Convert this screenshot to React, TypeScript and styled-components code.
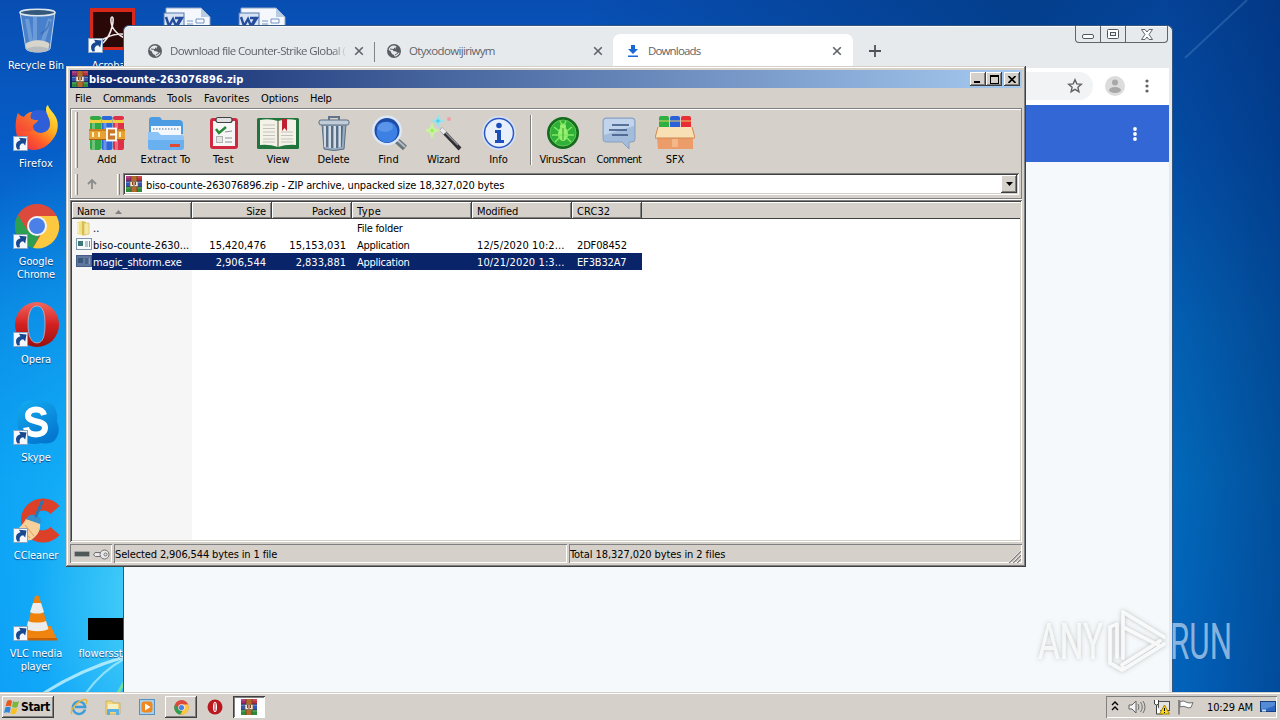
import React from 'react';
import styled, { createGlobalStyle, css } from 'styled-components';

const GlobalStyle = createGlobalStyle`
  * {
    box-sizing: border-box;
  }
  body {
    margin: 0;
    overflow: hidden;
    font-family: 'DejaVu Sans Condensed', 'DejaVu Sans', sans-serif;
    font-size: 11px;
    line-height: 13px;
    color: #000;
  }
  svg {
    display: block;
    flex: none;
  }
`;

const raised = css`
  box-shadow: inset -1px -1px #404040, inset 1px 1px #fff, inset -2px -2px #808080;
`;

const sunken = css`
  box-shadow: inset 1px 1px #808080, inset -1px -1px #fff;
`;

const Label = styled.span<{ $ls?: number }>`
  white-space: pre;
  letter-spacing: ${({ $ls }) => ($ls === undefined ? -0.13 : $ls)}px;
`;

const Screen = styled.div`
  position: relative;
  width: 1280px;
  height: 720px;
  overflow: hidden;
  display: flex;
  flex-direction: column;
`;

const Desktop = styled.div`
  position: relative;
  flex: 1;
  background:
    radial-gradient(ellipse 330px 480px at 170px 600px, rgba(90, 222, 248, 0.95), rgba(24, 184, 250, 0.65) 42%, rgba(0, 120, 230, 0) 100%),
    linear-gradient(90deg, rgba(0, 0, 0, 0) 0, rgba(0, 0, 0, 0) 45%, rgba(0, 52, 116, 0.62) 80%, rgba(0, 52, 116, 0.42) 91%, rgba(0, 44, 110, 0.66) 100%),
    linear-gradient(180deg, #084eb2 0, #065ec8 150px, #0680e0 320px, #0492f0 480px, #0488f4 692px);
`;

const Wallpaper = styled.svg`
  position: absolute;
  inset: 0;
`;

const IconGrid = styled.div`
  position: relative;
  display: grid;
  width: 300px;
  grid-template-columns: 74px 75px 75px 75px;
  grid-template-rows: repeat(7, 98px);
  padding-top: 7px;
  height: 692px;
  overflow: hidden;
`;

const Shortcut = styled.div<{ $col: number; $row: number }>`
  grid-column: ${({ $col }) => $col};
  grid-row: ${({ $row }) => $row};
  display: flex;
  flex-direction: column;
  align-items: center;
  gap: 4px;
  text-align: center;
  color: #fff;
  line-height: 13px;
  text-shadow: 0 1px 1px rgba(0, 30, 80, 0.7);
  height: 78px;
`;

const ShortcutLabel = styled(Label)<{ $shift?: boolean }>`
  margin-right: ${({ $shift }) => ($shift ? 22 : 2)}px;
`;

const ChromeWindow = styled.div`
  position: absolute;
  left: 123px;
  top: 25px;
  width: 1050px;
  height: 668px;
  border: 1px solid #34567c;
  border-bottom: none;
  border-radius: 6px 6px 0 0;
  background: #e7eaed;
  padding-right: 3px;
  box-shadow: inset 0 1px #f8fafb;
  display: flex;
  flex-direction: column;
`;

const TabStrip = styled.div`
  display: flex;
  align-items: flex-end;
  height: 42px;
  padding-left: 11px;
`;

const Tab = styled.div<{ $active?: boolean; $divider?: boolean }>`
  display: flex;
  align-items: center;
  width: ${({ $active }) => ($active ? 240 : 239)}px;
  height: 34px;
  padding: 0 ${({ $active }) => ($active ? 8 : 7)}px 0 12px;
  background: ${({ $active }) => ($active ? '#fff' : 'transparent')};
  border-radius: 7px 7px 0 0;
  color: #5f6368;
  font: 11.5px/16px 'Open Sans', 'Noto Sans', sans-serif;
  position: relative;
  ${({ $divider }) =>
    $divider &&
    css`
      &::after {
        content: '';
        position: absolute;
        right: -1px;
        top: 8px;
        height: 20px;
        width: 1px;
        background: #808488;
      }
    `}
`;

const TabTitle = styled.span<{ $ls: number; $fade?: boolean }>`
  flex: 1;
  margin: 0 4px 0 7px;
  overflow: hidden;
  white-space: nowrap;
  letter-spacing: ${({ $ls }) => $ls}px;
  ${({ $fade }) => $fade && 'mask-image: linear-gradient(90deg, #000 92%, transparent 100%);'}
`;

const NewTab = styled.div`
  display: flex;
  align-items: center;
  height: 34px;
  margin-left: 14px;
`;

const Caption = styled.div`
  position: absolute;
  right: 4px;
  top: 0;
  display: flex;
  height: 17px;
  border: 1px solid #5f6468;
  border-top: none;
  border-radius: 0 0 4px 4px;
`;

const CaptionButton = styled.div<{ $w: number }>`
  display: flex;
  align-items: center;
  justify-content: center;
  width: ${({ $w }) => $w}px;
  & + & {
    border-left: 1px solid #5f6468;
  }
`;

const ChromeToolbar = styled.div`
  display: flex;
  align-items: center;
  justify-content: flex-end;
  height: 37px;
  background: #fff;
  padding: 0 14px 1px 0;
`;

const Omnibox = styled.div`
  display: flex;
  align-items: center;
  justify-content: flex-end;
  flex: 1;
  height: 28px;
  margin-left: 100px;
  padding-right: 10px;
  border-radius: 14px;
  background: #f1f3f4;
`;

const Avatar = styled.div`
  margin: 0 14px 0 12px;
`;

const PageHeader = styled.div`
  display: flex;
  align-items: center;
  justify-content: flex-end;
  height: 57px;
  padding-right: 26px;
  background: #3367d6;
`;

const Page = styled.div`
  flex: 1;
  background: #f6f9fb;
`;

const RarWindow = styled.div`
  position: absolute;
  left: 66px;
  top: 66px;
  width: 960px;
  height: 501px;
  padding: 4px;
  background: #d5d0c9;
  box-shadow: inset -1px -1px #404040, inset 1px 1px #d4d0c8, inset -2px -2px #808080, inset 2px 2px #fff;
  display: flex;
  flex-direction: column;
`;

const TitleBar = styled.div`
  display: flex;
  align-items: center;
  height: 18px;
  padding: 0 2px 0 2px;
  background: linear-gradient(90deg, #0a246a, #a6caf0);
  color: #fff;
  font-weight: bold;
`;

const TitleText = styled(Label)`
  flex: 1;
  margin-left: 1px;
`;

const TitleButton = styled.div<{ $gap?: boolean }>`
  display: flex;
  align-items: center;
  justify-content: center;
  width: 16px;
  height: 14px;
  margin-left: ${({ $gap }) => ($gap ? 2 : 0)}px;
  background: #d5d0c9;
  ${raised}
`;

const MenuBar = styled.div`
  display: flex;
  align-items: center;
  height: 20px;
  padding-left: 5px;
`;

const MenuItem = styled.div<{ $w: number }>`
  width: ${({ $w }) => $w}px;
`;

const BarFrame = styled.div`
  height: 91px;
  border: 1px solid #808080;
  box-shadow: inset 1px 1px #fff, 0 1px #fff;
  display: flex;
  flex-direction: column;
  padding: 1px;
`;

const ToolRow = styled.div`
  display: flex;
  align-items: center;
  height: 60px;
  padding-left: 3px;
`;

const AddressRow = styled.div`
  display: flex;
  align-items: center;
  height: 27px;
  padding: 1px 0 0 3px;
`;

const Grip = styled.div<{ $h: number; $gap?: number }>`
  width: 3px;
  height: ${({ $h }) => $h}px;
  margin-right: ${({ $gap }) => $gap || 0}px;
  border-left: 1px solid #fff;
  border-right: 1px solid #808080;
`;

const ToolButton = styled.div<{ $w: number }>`
  display: flex;
  flex-direction: column;
  align-items: center;
  gap: 2px;
  width: ${({ $w }) => $w}px;
  padding-top: 1px;
`;

const ToolSeparator = styled.div`
  width: 2px;
  height: 50px;
  margin: 0 3px 0 4px;
  border-left: 1px solid #808080;
  border-right: 1px solid #fff;
`;

const UpButton = styled.div`
  display: flex;
  justify-content: center;
  width: 28px;
  margin-right: 11px;
`;

const Combo = styled.div`
  display: flex;
  align-items: center;
  flex: 1;
  height: 22px;
  margin-left: 3px;
  margin-right: 1px;
  padding: 2px 2px 2px 3px;
  background: #fff;
  box-shadow: inset 1px 1px #808080, inset -1px -1px #fff, inset 2px 2px #404040, inset -2px -2px #d4d0c8;
`;

const ComboText = styled(Label)`
  flex: 1;
  margin-left: 4px;
  padding-top: 2px;
`;

const ComboArrow = styled.div`
  display: flex;
  align-items: center;
  justify-content: center;
  width: 16px;
  height: 18px;
  background: #d5d0c9;
  ${raised}
`;

const FileList = styled.div`
  margin-top: 1px;
  height: 342px;
  padding: 2px 2px 2px 2px;
  background: linear-gradient(90deg, #f6f6f6 122px, #fff 122px);
  box-shadow: inset 1px 1px #808080, inset -1px -1px #fff, inset 2px 2px #404040, inset -2px -2px #d4d0c8;
`;

const HeaderRow = styled.div`
  display: flex;
  height: 17px;
  background: #d5d0c9;
  box-shadow: inset 0 -1px #404040, inset 0 1px #fff;
`;

const HeaderCell = styled.div<{ $w: number; $right?: boolean }>`
  display: flex;
  align-items: center;
  gap: 10px;
  justify-content: ${({ $right }) => ($right ? 'flex-end' : 'flex-start')};
  width: ${({ $w }) => $w}px;
  padding: 2px 6px 0 5px;
  box-shadow: inset -1px -1px #404040, inset 1px 1px #fff, inset -2px -2px #808080;
`;

const FileRow = styled.div<{ $selected?: boolean }>`
  display: flex;
  width: 570px;
  height: 17px;
  color: ${({ $selected }) => ($selected ? '#fff' : '#000')};
  background: ${({ $selected }) => ($selected ? 'linear-gradient(90deg, transparent 20px, #0a246a 20px)' : 'transparent')};
  ${Label} {
    padding-top: 2px;
  }
`;

const Cell = styled.div<{ $w: number; $right?: boolean }>`
  display: flex;
  align-items: center;
  justify-content: ${({ $right }) => ($right ? 'flex-end' : 'flex-start')};
  width: ${({ $w }) => $w}px;
  padding: 0 6px 0 5px;
`;

const NameCell = styled.div`
  display: flex;
  align-items: center;
  gap: 1px;
  width: 120px;
  padding-left: 4px;
`;

const StatusBar = styled.div`
  display: flex;
  gap: 2px;
  height: 19px;
  margin-top: 2px;
`;

const StatusPane = styled.div<{ $w?: number; $icons?: boolean }>`
  display: flex;
  align-items: center;
  gap: 3px;
  padding: 1px 1px 0 ${({ $icons }) => ($icons ? 4 : 1)}px;
  ${({ $w }) => ($w ? `width: ${$w}px;` : 'flex: 1;')}
  ${sunken}
`;

const Spacer = styled.div`
  flex: 1;
`;

const SizeGrip = styled.div`
  align-self: flex-end;
`;

const Watermark = styled.svg`
  position: absolute;
  left: 1030px;
  top: 600px;
`;

const Taskbar = styled.div`
  position: relative;
  display: flex;
  align-items: center;
  height: 28px;
  padding: 3px 3px 1px 2px;
  background: #d5d0c9;
  box-shadow: inset 0 1px #d4d0c8, inset 0 2px #fff;
`;

const StartButton = styled.div`
  display: flex;
  align-items: center;
  gap: 1px;
  width: 52px;
  height: 22px;
  margin-right: 8px;
  padding-left: 2px;
  font-size: 12px;
  font-weight: bold;
  ${raised}
`;

const QuickLaunch = styled.div<{ $w: number }>`
  display: flex;
  justify-content: center;
  width: ${({ $w }) => $w}px;
`;

const TaskButton = styled.div<{ $pressed?: boolean }>`
  display: flex;
  align-items: center;
  justify-content: center;
  width: 32px;
  height: 22px;
  margin-left: ${({ $pressed }) => ($pressed ? 0 : 1)}px;
  background: ${({ $pressed }) => ($pressed ? '#fff' : '#d5d0c9')};
  ${({ $pressed }) =>
    $pressed ? 'box-shadow: inset 1px 1px #404040, inset -1px -1px #fff, inset 2px 2px #808080;' : raised}
`;

const Tray = styled.div`
  display: flex;
  align-items: center;
  width: 171px;
  height: 22px;
  padding: 0 1px 0 4px;
  ${sunken}
`;

const Clock = styled(Label)`
  flex: 1;
  text-align: center;
`;

/* ---------- icons ---------- */

const RarIcon = ({ size = 16 }: { size?: number }) => (
  <svg width={size} height={size} viewBox="0 0 16 16">
    <rect x="0" y="0" width="16" height="5" fill="#a02a78" />
    <rect x="9" y="0" width="7" height="5" fill="#c0303c" />
    <rect x="0" y="5.2" width="16" height="5" fill="#3454b4" />
    <rect x="0" y="10.6" width="16" height="5.4" fill="#2c8c3c" />
    <path d="M0 1h16M0 6.5h16M0 12h16" stroke="#fff" strokeOpacity=".25" />
    <path d="M0 5h16M0 10.5h16" stroke="#222850" strokeWidth=".8" />
    <rect x="5" y="0" width="6" height="16" fill="#b06a2c" />
    <path d="M5 0v16M11 0v16" stroke="#603010" strokeWidth=".6" />
    <rect x="4" y="5.5" width="8" height="5" fill="#f0e8d8" stroke="#706050" strokeWidth=".7" />
    <path d="M6.5 6v3M8 6v4M9.5 6v3" stroke="#8a4018" />
  </svg>
);

const ShortcutArrow = () => (
  <g>
    <rect x=".5" y="31.5" width="14" height="14" fill="#f4f8fc" stroke="#8aa4c0" />
    <path d="M4.500 44.500C1.500 40 3.500 36 7.500 35.200L6 32.800l7.500.8-1.300 7-2-2.400c-3 .3-4.200 2.800-3.200 6z" fill="#184890" />
  </g>
);

const RecycleIcon = () => (
  <svg width="48" height="48" viewBox="0 0 48 48">
    <path d="M7 5l6 37c4 4 20 4 24 0l5-37z" fill="#7fa8dc" fillOpacity=".55" stroke="#b8d2ec" />
    <path d="M14 12l4 22M37 12l-7 22M22 10v24" stroke="#d8ecff" strokeOpacity=".25" strokeWidth="4" />
    <path d="M36 14c2 4-4 10-8 13" stroke="#2c60a8" strokeOpacity=".5" strokeWidth="2" fill="none" />
    <path d="M12.500 37c5-5 20-5 24 0l-1 5c-4 4-18 4-22 0z" fill="#d8d6cc" />
    <ellipse cx="24.500" cy="42.500" rx="11" ry="3" fill="#b8bcc0" />
    <ellipse cx="24.500" cy="5.500" rx="17.500" ry="3.200" fill="#34587c" stroke="#dce6ee" strokeWidth="1.500" />
  </svg>
);

const AcrobatIcon = () => (
  <svg width="48" height="48" viewBox="0 0 48 48">
    <rect x="2" y="1" width="45" height="42" fill="#d8281c" />
    <rect x="5" y="5" width="39" height="35" fill="#2a0808" />
    <path d="M13 36c-3-3 12-9 20-9 5 0 11 1 10 4-3 3-15-3-19-12-2-6-1-9 0-9 3 0 0 17-8 25-1 1-2 2-3 1z" fill="none" stroke="#f0e8e8" strokeWidth="1.600" />
    <ShortcutArrow />
  </svg>
);

const DocIcon = () => (
  <svg width="48" height="48" viewBox="0 0 48 48">
    <path d="M3 1h35l9 9v37H3z" fill="#f4f8fc" stroke="#8ca4c4" />
    <path d="M38 1v9h9z" fill="#b8cce4" />
    <rect x="1" y="6" width="20" height="20" fill="#d8e4f4" stroke="#5878b0" />
    <path d="M3 10l3 9 4-7 3 7 5-9M12 11h7l-5 8" fill="none" stroke="#244c9c" strokeWidth="2.400" />
    <path d="M24 14h6M24 17h6M33 12h8v4h-8z" stroke="#7494c4" fill="none" />
  </svg>
);

const FirefoxIcon = () => (
  <svg width="48" height="48" viewBox="0 0 48 48">
    <defs>
      <linearGradient id="fx" x1="0.900" y1="0" x2="0.200" y2="1">
        <stop offset="0" stopColor="#fff044" />
        <stop offset=".4" stopColor="#ffb020" />
        <stop offset=".7" stopColor="#ff5a2c" />
        <stop offset="1" stopColor="#e83048" />
      </linearGradient>
    </defs>
    <circle cx="26" cy="22" r="17" fill="#2f5fd8" />
    <path d="M5 8c1 2 3 3 6 4 2-3 5-5 8-5-2 3-2 5-1 7 2 1 5 1 7 1-1 3-5 4-5 6 0 4 3 7 8 7 7-1 9-5 9-9 0-6-4-10-4-14 0-2 0-4 2-5 1 5 7 8 9 15 2 7 0 14-4 19-5 7-12 11-19 11C12 45 4 38 3 26c-1-6 0-13 2-18z" fill="url(#fx)" />
    <path d="M5 8c1 2 3 3 6 4 2-3 5-5 8-5-2 3-2 5-1 7 2 1 5 1 7 1-1 3-5 4-5 6 0 2 0 3 1 4-8 4-15-2-18 3 0-8 0-13 2-20z" fill="#f0463c" fillOpacity=".55" />
    <ShortcutArrow />
  </svg>
);

const ChromeLogo = () => (
  <g>
    <circle cx="24" cy="23" r="22" fill="#dc4a3c" />
    <path d="M5 12a22 22 0 0 0 15 33l8.700-17.500A10 10 0 0 1 15 28z" fill="#2ca050" />
    <path d="M24 13h19.600A22 22 0 0 1 20 45l10-17a10 10 0 0 0-6-15z" fill="#fcc840" />
    <path d="M5 12L15.300 28A10 10 0 0 1 24 13h19.700A22 22 0 0 0 5 12z" fill="#dc4a3c" />
    <circle cx="24" cy="23" r="10" fill="#f4f4f4" />
    <circle cx="24" cy="23" r="8" fill="#4a80e8" />
  </g>
);

const ChromeIcon = () => (
  <svg width="48" height="48" viewBox="0 0 48 48">
    <ChromeLogo />
    <ShortcutArrow />
  </svg>
);

const OperaIcon = () => (
  <svg width="48" height="48" viewBox="0 0 48 48">
    <defs>
      <linearGradient id="op" x1="0" y1="0" x2="0" y2="1">
        <stop offset="0" stopColor="#f06860" />
        <stop offset=".5" stopColor="#d42020" />
        <stop offset="1" stopColor="#981010" />
      </linearGradient>
    </defs>
    <path fillRule="evenodd" d="M24 1a22 22.500 0 1 0 0 45 22 22.500 0 0 0 0-45zM24 5c6 0 8 7 8 18.500S30 42 24 42s-9-7-9-18.500S18 5 24 5z" fill="url(#op)" />
    <path d="M24 5c6 0 8 7 8 18.500S30 42 24 42s-9-7-9-18.500S18 5 24 5z" fill="none" stroke="#f8c8c0" strokeOpacity=".6" />
    <ShortcutArrow />
  </svg>
);

const SkypeIcon = () => (
  <svg width="48" height="48" viewBox="0 0 48 48">
    <defs>
      <linearGradient id="sk" x1="0" y1="0" x2=".5" y2="1">
        <stop offset="0" stopColor="#14acf0" />
        <stop offset="1" stopColor="#0478d0" />
      </linearGradient>
    </defs>
    <path d="M14 2c5-1 9 0 12 1 10-1 16 2 17 9 2 5 1 8 1 11 3 7 2 13-2 18-4 4-9 4-14 3-8 2-15 1-19-4-5-7-5-20-4-27 1-6 4-10 9-11z" fill="url(#sk)" />
    <path d="M31 16c-1-4-4-5.500-8-5.500s-8 2-8 6c0 8 17 4 17 12 0 5-4 7-9 7-5 0-9-2-10-7" fill="none" stroke="#fff" strokeWidth="6" />
    <ShortcutArrow />
  </svg>
);

const CCleanerIcon = () => (
  <svg width="48" height="48" viewBox="0 0 48 48">
    <path d="M42 13A16 16 0 1 0 42 34" fill="none" stroke="#dc4028" strokeWidth="12" />
    <path d="M13 22l14 4c1 8-3 13-9 17C12 44 6 41 2 33c5-2 8-6 11-11z" fill="#f8d09c" />
    <path d="M8 31l9 10M12 28l9 11" stroke="#d8a060" />
    <path d="M13 22c2-4 5-5 8-4l5 2c3 2 2 5 1 7z" fill="#3490cc" />
    <path d="M23 19l6-14" stroke="#2878b4" strokeWidth="3" strokeLinecap="round" />
    <ShortcutArrow />
  </svg>
);

const VlcIcon = () => (
  <svg width="48" height="48" viewBox="0 0 48 48">
    <path d="M12 31h26l6 14H6z" fill="#f08410" />
    <path d="M6 43h38v2.500H6z" fill="#c86008" />
    <path d="M22 1q2-1 4 0l10 35c-5 4-18 4-23 0z" fill="#f0820c" />
    <path d="M20 8h8l3 9c-3 2-11 2-14 0z" fill="#ececec" />
    <path d="M15 26c4 2 14 2 18 0l2.500 8c-5 3-17 3-22 0z" fill="#ececec" />
    <ShortcutArrow />
  </svg>
);

const BlackThumb = () => (
  <svg width="48" height="48" viewBox="0 0 48 48">
    <path d="M0 23h48v22H0z" fill="#000" />
  </svg>
);

const GlobeIcon = () => (
  <svg width="16" height="16" viewBox="0 0 16 16">
    <circle cx="8" cy="8" r="7" fill="#5a5e62" />
    <path d="M8.500 2.500l2 1-1 2-2 .5-.5 2 3 .5 2 1.500 1.500-.5c-.6 2-2 3.600-4.500 4.200L8 12l-2-1-1.500-3L2.600 7C3 4.500 5 2.500 8.500 2.500z" fill="#e7eaed" />
    <path d="M4 6l4 .500 1-2M9 12l3-2" stroke="#5a5e62" fill="none" />
  </svg>
);

const DownloadIcon = () => (
  <svg width="16" height="16" viewBox="0 0 16 16">
    <path d="M6 2h4v4h3l-5 5-5-5h3zM3 12.500h10V14H3z" fill="#1a67d8" />
  </svg>
);

const CloseIcon = () => (
  <svg width="16" height="16" viewBox="0 0 16 16">
    <path d="M4.200 4.200l7.600 7.600M11.800 4.200l-7.600 7.600" stroke="#5f6368" strokeWidth="1.600" />
  </svg>
);

const Dots = ({ color, r = 1.6 }: { color: string; r?: number }) => (
  <svg width="16" height="16" viewBox="0 0 16 16">
    <circle cx="8" cy="3" r={r} fill={color} />
    <circle cx="8" cy="8" r={r} fill={color} />
    <circle cx="8" cy="13" r={r} fill={color} />
  </svg>
);

const AddIcon = () => (
  <svg width="36" height="36" viewBox="0 0 36 36">
    {['#30a844', '#2c68d8', '#e03048'].map((color, i) => (
      <g key={color}>
        <rect x={1 + i * 11.5} y="2" width="11" height="33" rx="2" fill={color} />
        <rect x={3 + i * 11.5} y="8" width="3" height="27" fill="#fff" fillOpacity=".3" />
        <rect x={1 + i * 11.5} y="4" width="11" height="4" fill="#f0d040" />
        <rect x={1 + i * 11.5} y="1" width="11" height="4" rx="2" fill={color} />
      </g>
    ))}
    <rect x="0" y="14" width="36" height="11" rx="1" fill="#e8a030" />
    <path d="M0 15h36M0 24.500h36" stroke="#a86010" />
    <path d="M4 17v5M10 17v5M31 17v5" stroke="#fff0c0" strokeWidth="2" />
    <rect x="18" y="13.500" width="9" height="12" fill="#c87828" stroke="#fff" strokeWidth="1.800" />
    <path d="M21 19.500h7" stroke="#fff" strokeWidth="2" />
  </svg>
);

const ExtractIcon = () => (
  <svg width="38" height="36" viewBox="0 0 38 36">
    <path d="M2 5q0-3 3-3h7q2 0 3 3h17q4 0 4 4v10H2z" fill="#4c9ce4" />
    <path d="M4 11h30v11H4z" fill="#f4f8fc" />
    <path d="M6 14h26" stroke="#a0b4c8" strokeWidth="2" strokeDasharray="1.500 1.500" />
    <path d="M1 17h10l3 3h20q3 0 3 3v9q0 3-3 3H4q-3 0-3-3z" fill="#8cc4f8" />
    <path d="M1 25h36v7q0 3-3 3H4q-3 0-3-3z" fill="#68b0f0" />
    <rect x="23" y="29" width="10" height="3" fill="#e04830" />
  </svg>
);

const TestIcon = () => (
  <svg width="32" height="36" viewBox="0 0 32 36">
    <rect x="2" y="3" width="28" height="31" rx="3" fill="#d02840" />
    <rect x="5" y="6" width="22" height="25" fill="#f6f6f6" />
    <rect x="8" y="2.500" width="16" height="5" rx="2" fill="#e0e0e0" stroke="#404040" strokeWidth="1.200" />
    <path d="M8 14l3 4 7-6" fill="none" stroke="#288838" strokeWidth="2.500" />
    <path d="M17 17l7-1M17 23h7M17 27h7" stroke="#909090" />
    <rect x="8.500" y="21.500" width="6" height="6" fill="#e4e4e4" stroke="#b0b0b0" />
  </svg>
);

const ViewIcon = () => (
  <svg width="44" height="36" viewBox="0 0 44 36">
    <rect x="1" y="3" width="42" height="31" rx="1.500" fill="#20743c" />
    <path d="M4 5q9-2 18 1 9-3 18-1v25q-9-1-18 2-9-3-18-2z" fill="#f4f2e8" />
    <path d="M22 6v26" stroke="#888870" strokeWidth="1.500" />
    <path d="M7 10h12M7 13.500h12M7 17h12M7 20.500h12M7 24h12M7 27h12M25 20.500h12M25 17h12M25 24h12M25 27h12" stroke="#c4c4ba" />
    <path d="M26 4h5v12l-2.500-3-2.500 3z" fill="#c02030" />
  </svg>
);

const DeleteIcon = () => (
  <svg width="32" height="36" viewBox="0 0 32 36">
    <path d="M4 9h24l-2 25q-10 3-20 0z" fill="#98acc0" stroke="#5c7084" />
    <path d="M9 11v21M14 11v22M19 11v22M24 11l-1 21" stroke="#56687e" strokeWidth="1.800" />
    <path d="M7 11v21M12 11v22M17 11v22M22 11v21" stroke="#e4ecf4" strokeWidth="1.500" />
    <rect x="1" y="5" width="30" height="5" rx="2" fill="#c0ccd8" stroke="#5c7084" />
    <path d="M11 5V2h10v3" fill="none" stroke="#60748a" strokeWidth="2" />
  </svg>
);

const FindIcon = () => (
  <svg width="36" height="36" viewBox="0 0 36 36">
    <path d="M24 24l10 9" stroke="#68747c" strokeWidth="6" />
    <path d="M24 23l10 9" stroke="#b4bcc4" strokeWidth="2" />
    <circle cx="16" cy="15.500" r="15" fill="#dce8f8" />
    <circle cx="16" cy="15.500" r="12.500" fill="#1c4ca8" />
    <circle cx="16" cy="17" r="10.500" fill="#3c80e4" />
    <ellipse cx="14" cy="12" rx="8" ry="5" fill="#88b4f4" fillOpacity=".4" />
  </svg>
);

const WizardIcon = () => (
  <svg width="36" height="36" viewBox="0 0 36 36">
    <path d="M15 14l19 20" stroke="#303034" strokeWidth="4" />
    <path d="M15 13l17 17" stroke="#909098" strokeWidth="1.500" />
    <path d="M15 14l4 4" stroke="#e8e8e8" strokeWidth="4" />
    <path d="M6 10l1.500 4 4 1.500-4 1.500L6 21l-1.500-4-4-1.500 4-1.500z" fill="#98e850" stroke="#c8f4a0" strokeWidth="2" />
    <path d="M12 1l1.300 3.500L17 6l-3.700 1.500L12 11l-1.300-3.500L7 6l3.700-1.500z" fill="#50d0e8" stroke="#98e4f0" strokeWidth="1.500" />
    <circle cx="23" cy="4" r="2" fill="#f0a0a8" />
  </svg>
);

const InfoIcon = () => (
  <svg width="36" height="36" viewBox="0 0 36 36">
    <circle cx="18" cy="18" r="17" fill="#d4e0f8" />
    <circle cx="18" cy="18" r="14.500" fill="#e8f0fc" stroke="#2c58c0" strokeWidth="1.500" />
    <circle cx="18" cy="10.500" r="2.800" fill="#1c50b8" />
    <path d="M14 15h6v10h3v3H14v-3h2v-7h-2z" fill="#1c50b8" />
  </svg>
);

const VirusIcon = () => (
  <svg width="34" height="36" viewBox="0 0 34 36">
    <circle cx="17" cy="18" r="16" fill="#146c1c" />
    <circle cx="17" cy="18" r="13" fill="#30b038" stroke="#60c858" />
    <ellipse cx="17" cy="19" rx="5" ry="7" fill="#98f070" />
    <circle cx="17" cy="11.500" r="3" fill="#98f070" />
    <path d="M8 12l5 4M26 12l-5 4M6 20h22M9 27l5-5M25 27l-5-5M14 6l2 4M20 6l-2 4" stroke="#80e860" strokeWidth="1.500" />
    <path d="M17 13v12" stroke="#30a030" />
  </svg>
);

const CommentIcon = () => (
  <svg width="34" height="36" viewBox="0 0 34 36">
    <path d="M4 3h26q3 0 3 3v18q0 3-3 3h-3v7l-7-7H4q-3 0-3-3V6q0-3 3-3z" fill="#a4bcdc" stroke="#88a0c0" />
    <path d="M4 4h26q2 0 2 2v5L2 20V6q0-2 2-2z" fill="#c8daf0" fillOpacity=".8" />
    <path d="M10 10h17M7 15h18M10 20h16" stroke="#34507c" strokeWidth="1.500" />
  </svg>
);

const SfxIcon = () => (
  <svg width="40" height="36" viewBox="0 0 40 36">
    <rect x="4" y="1" width="10" height="15" rx="2" fill="#30b040" />
    <rect x="15" y="1" width="10" height="15" rx="2" fill="#2c60d8" />
    <rect x="26" y="1" width="10" height="15" rx="2" fill="#e82c34" />
    <path d="M4 6h10M15 6h10M26 6h10" stroke="#e8d060" strokeWidth="1" />
    <path d="M3 12h34v22H3z" fill="#e8a070" />
    <path d="M3 12h34l3 11H0z" fill="#f8e0b4" />
    <path d="M2 23h36v11H3z" fill="#ec9c68" />
    <path d="M17 24v8h6v-8" fill="#f4b888" />
    <path d="M3 12L0 23M37 12l3 11M0 23h40" stroke="#d08850" />
  </svg>
);

const FolderIcon = () => (
  <svg width="16" height="16" viewBox="0 0 16 16">
    <path d="M1 2l6-1v14l-6-1z" fill="#f0e088" />
    <path d="M6 1l4 1v13l-4 .500z" fill="#d8bc50" />
    <path d="M8 3h5v11l-5 1z" fill="#f4e8a0" stroke="#d0b860" strokeWidth=".6" />
    <path d="M2 3v10" stroke="#fffce0" />
  </svg>
);

const ExeIcon = ({ selected }: { selected?: boolean }) => (
  <svg width="16" height="16" viewBox="0 0 16 16">
    <rect x=".5" y="1.500" width="15" height="11" fill={selected ? '#6078a0' : '#f6fafc'} stroke={selected ? '#485c88' : '#8098a8'} />
    <rect x="2" y="4" width="5" height="5" fill={selected ? '#385878' : '#3c7878'} />
    <path d="M9 5h3M9 7h3M9 9h3" stroke={selected ? '#384870' : '#7890a0'} />
    <path d="M13.500 4v6" stroke={selected ? '#8c9cbc' : '#5890c0'} />
  </svg>
);

const WindowsFlag = () => (
  <svg width="16" height="16" viewBox="0 0 16 16">
    <path d="M3 2q3-2 5 0L7 7.500Q4.500 6 1.500 7.500z" fill="#e85820" />
    <path d="M9 2.300q3 1.500 6 0L13.500 8Q11 9.500 8 8z" fill="#78b83c" />
    <path d="M1.300 8.500q3-1.500 5.500 0L5.500 14Q3 12.500 0 14z" fill="#3088dc" />
    <path d="M7.700 9q3 1.500 5.700 0L12 14.500q-3 1.500-5.600 0z" fill="#f8c020" />
  </svg>
);

const IeIcon = () => (
  <svg width="18" height="18" viewBox="0 0 18 18">
    <path d="M15 11.500A6.200 6.200 0 1 1 15.200 9H5" fill="none" stroke="#3c9cdc" strokeWidth="2.400" />
    <path d="M2 16C-1 13 8 2 15 1.500c3 0 2 3 .5 5" fill="none" stroke="#e8b838" strokeWidth="1.400" />
  </svg>
);

const ExplorerIcon = () => (
  <svg width="18" height="18" viewBox="0 0 18 18">
    <path d="M2 3h6l1 2h7v11H2z" fill="#f0d880" stroke="#c8a848" strokeWidth=".7" />
    <path d="M4 6h10v5H4z" fill="#f8f0c0" />
    <path d="M3 17v-5q0-1 1-1h10q1 0 1 1v5h-3v-3H6v3z" fill="#58b0e4" />
  </svg>
);

const MediaIcon = () => (
  <svg width="18" height="18" viewBox="0 0 18 18">
    <rect x="1.500" y="1.500" width="15" height="15" fill="#a8d0ec" stroke="#5890c0" />
    <rect x="3.500" y="3.500" width="11" height="11" rx="3" fill="#f08820" />
    <path d="M7 5.500v7l5.500-3.500z" fill="#fff" />
  </svg>
);

const OperaSmall = () => (
  <svg width="16" height="16" viewBox="0 0 16 16">
    <circle cx="8" cy="8" r="7.500" fill="#b81820" />
    <ellipse cx="8" cy="8" rx="2" ry="5" fill="#fff" />
    <path d="M8 4v8" stroke="#c02028" />
  </svg>
);

const toolIcons = [
  { name: 'Add', w: 54, ls: 0.1, icon: <AddIcon /> },
  { name: 'Extract To', w: 63, ls: 0.1, icon: <ExtractIcon /> },
  { name: 'Test', w: 53, ls: 0.4, icon: <TestIcon /> },
  { name: 'View', w: 56, ls: -0.1, icon: <ViewIcon /> },
  { name: 'Delete', w: 55, ls: -0.1, icon: <DeleteIcon /> },
  { name: 'Find', w: 55, ls: 0.1, icon: <FindIcon /> },
  { name: 'Wizard', w: 55, ls: -0.1, icon: <WizardIcon /> },
  { name: 'Info', w: 55, ls: 0, icon: <InfoIcon /> },
  { name: 'VirusScan', w: 55, ls: -0.3, icon: <VirusIcon />, separated: true },
  { name: 'Comment', w: 58, ls: -0.5, icon: <CommentIcon /> },
  { name: 'SFX', w: 54, ls: -0.1, icon: <SfxIcon /> },
];

const menus = [
  { name: 'File', w: 28, ls: 0 },
  { name: 'Commands', w: 64, ls: -0.45 },
  { name: 'Tools', w: 37, ls: 0.2 },
  { name: 'Favorites', w: 57, ls: 0.1 },
  { name: 'Options', w: 49, ls: -0.1 },
  { name: 'Help', w: 40, ls: -0.3 },
];

const shortcuts = [
  { name: 'Recycle Bin', col: 1, row: 1, icon: <RecycleIcon /> },
  { name: 'Firefox', col: 1, row: 2, icon: <FirefoxIcon />, ls: 0.2 },
  { name: 'Google\nChrome', col: 1, row: 3, icon: <ChromeIcon /> },
  { name: 'Opera', col: 1, row: 4, icon: <OperaIcon /> },
  { name: 'Skype', col: 1, row: 5, icon: <SkypeIcon /> },
  { name: 'CCleaner', col: 1, row: 6, icon: <CCleanerIcon /> },
  { name: 'VLC media\nplayer', col: 1, row: 7, icon: <VlcIcon /> },
  { name: 'Acrobat', col: 2, row: 1, icon: <AcrobatIcon /> },
  { name: 'flowersst', col: 2, row: 7, icon: <BlackThumb />, shift: true },
  { name: '', col: 3, row: 1, icon: <DocIcon /> },
  { name: '', col: 4, row: 1, icon: <DocIcon /> },
];

const files = [
  { name: '..', size: '', packed: '', type: 'File folder', modified: '', crc: '' },
  { name: 'biso-counte-2630...', size: '15,420,476', packed: '15,153,031', type: 'Application', modified: '12/5/2020 10:2...', crc: '2DF08452' },
  { name: 'magic_shtorm.exe', size: '2,906,544', packed: '2,833,881', type: 'Application', modified: '10/21/2020 1:3...', crc: 'EF3B32A7', selected: true },
];

const Browser = () => (
  <ChromeWindow>
    <TabStrip>
      <Tab $divider>
        <GlobeIcon />
        <TabTitle $ls={-0.62} $fade>Download file Counter-Strike Global (</TabTitle>
        <CloseIcon />
      </Tab>
      <Tab>
        <GlobeIcon />
        <TabTitle $ls={-0.65}>Otyxodowijiriwym</TabTitle>
        <CloseIcon />
      </Tab>
      <Tab $active>
        <DownloadIcon />
        <TabTitle $ls={-0.85}>Downloads</TabTitle>
        <CloseIcon />
      </Tab>
      <NewTab>
        <svg width="16" height="16" viewBox="0 0 16 16">
          <path d="M8 2v12M2 8h12" stroke="#4f5358" strokeWidth="1.800" />
        </svg>
      </NewTab>
    </TabStrip>
    <Caption>
      <CaptionButton $w={24}>
        <svg width="13" height="14" viewBox="0 0 13 14">
          <rect x=".5" y="7.500" width="11" height="4" rx="1.500" fill="#fff" stroke="#50565c" />
        </svg>
      </CaptionButton>
      <CaptionButton $w={25}>
        <svg width="12" height="12" viewBox="0 0 12 12">
          <rect x=".5" y="1.500" width="11" height="9" rx="1" fill="#fff" stroke="#50565c" />
          <rect x="3.500" y="4.500" width="5" height="3" fill="#e7eaed" stroke="#50565c" />
        </svg>
      </CaptionButton>
      <CaptionButton $w={42}>
        <svg width="12" height="11" viewBox="0 0 12 11">
          <path d="M.5.500h3.500l2 2.500 2-2.500h3.500L8 5.500l3.500 5H8l-2-2.500-2 2.500H.5l3.500-5z" fill="#fff" stroke="#50565c" strokeWidth=".9" />
        </svg>
      </CaptionButton>
    </Caption>
    <ChromeToolbar>
      <Omnibox>
        <svg width="16" height="16" viewBox="0 0 16 16">
          <path d="M8 1.800l1.800 4.100 4.500.4-3.400 3 1 4.400L8 11.400l-3.900 2.300 1-4.400-3.400-3 4.500-.4z" fill="none" stroke="#5f6368" strokeWidth="1.400" />
        </svg>
      </Omnibox>
      <Avatar>
        <svg width="20" height="20" viewBox="0 0 20 20">
          <circle cx="10" cy="10" r="10" fill="#dcdcdc" />
          <circle cx="10" cy="6.500" r="3" fill="#a8a8a8" />
          <ellipse cx="10" cy="14" rx="6" ry="3" fill="#a8a8a8" />
        </svg>
      </Avatar>
      <Dots color="#5f6368" />
    </ChromeToolbar>
    <PageHeader>
      <Dots color="#fff" r={1.9} />
    </PageHeader>
    <Page />
  </ChromeWindow>
);

const Archiver = () => (
  <RarWindow>
    <TitleBar>
      <RarIcon />
      <TitleText $ls={0.12}>biso-counte-263076896.zip</TitleText>
      <TitleButton>
        <svg width="8" height="8" viewBox="0 0 8 8"><path d="M0 6h6v2H0z" /></svg>
      </TitleButton>
      <TitleButton>
        <svg width="9" height="9" viewBox="0 0 9 9"><path d="M0 0h9v9H0zM1 2v6h7V2z" fillRule="evenodd" /></svg>
      </TitleButton>
      <TitleButton $gap>
        <svg width="8" height="7" viewBox="0 0 8 7"><path d="M.5 0l7 7M7.500 0l-7 7" stroke="#000" strokeWidth="1.600" /></svg>
      </TitleButton>
    </TitleBar>
    <MenuBar>
      {menus.map((menu) => (
        <MenuItem key={menu.name} $w={menu.w}>
          <Label $ls={menu.ls}>{menu.name}</Label>
        </MenuItem>
      ))}
    </MenuBar>
    <BarFrame>
      <ToolRow>
        <Grip $h={56} $gap={2} />
        {toolIcons.map((tool) => (
          <React.Fragment key={tool.name}>
            {tool.separated && <ToolSeparator />}
            <ToolButton $w={tool.w}>
              {tool.icon}
              <Label $ls={tool.ls}>{tool.name}</Label>
            </ToolButton>
          </React.Fragment>
        ))}
      </ToolRow>
      <AddressRow>
        <Grip $h={21} />
        <UpButton>
          <svg width="12" height="12" viewBox="0 0 12 12">
            <path d="M6 11V2M2 6l4-4 4 4" fill="none" stroke="#8c8c8c" strokeWidth="1.800" />
          </svg>
        </UpButton>
        <Grip $h={21} />
        <Combo>
          <RarIcon />
          <ComboText>biso-counte-263076896.zip - ZIP archive, unpacked size 18,327,020 bytes</ComboText>
          <ComboArrow>
            <svg width="7" height="4" viewBox="0 0 7 4"><path d="M0 0h7L3.500 4z" /></svg>
          </ComboArrow>
        </Combo>
      </AddressRow>
    </BarFrame>
    <FileList>
      <HeaderRow>
        <HeaderCell $w={120}>
          <Label $ls={-0.3}>Name</Label>
          <svg width="7" height="4" viewBox="0 0 7 4"><path d="M0 4h7L3.500 0z" fill="#808080" /></svg>
        </HeaderCell>
        <HeaderCell $w={80} $right><Label>Size</Label></HeaderCell>
        <HeaderCell $w={80} $right><Label>Packed</Label></HeaderCell>
        <HeaderCell $w={120}><Label $ls={0.4}>Type</Label></HeaderCell>
        <HeaderCell $w={100}><Label>Modified</Label></HeaderCell>
        <HeaderCell $w={70}><Label $ls={0.1}>CRC32</Label></HeaderCell>
      </HeaderRow>
      {files.map((file) => (
        <FileRow key={file.name} $selected={file.selected}>
          <NameCell>
            {file.name === '..' ? <FolderIcon /> : <ExeIcon selected={file.selected} />}
            <Label $ls={file.selected ? -0.12 : 0}>{file.name}</Label>
          </NameCell>
          <Cell $w={80} $right><Label $ls={0}>{file.size}</Label></Cell>
          <Cell $w={80} $right><Label $ls={0}>{file.packed}</Label></Cell>
          <Cell $w={120}><Label $ls={-0.25}>{file.type}</Label></Cell>
          <Cell $w={100}><Label $ls={0.12}>{file.modified}</Label></Cell>
          <Cell $w={70}><Label $ls={-0.15}>{file.crc}</Label></Cell>
        </FileRow>
      ))}
    </FileList>
    <StatusBar>
      <StatusPane $w={42} $icons>
        <svg width="16" height="8" viewBox="0 0 16 8">
          <rect x=".5" y="1.500" width="15" height="5" rx="1" fill="#505858" stroke="#a0a4a4" />
        </svg>
        <svg width="17" height="11" viewBox="0 0 17 11">
          <path d="M8 3.500H2L.5 6l2 1.500H8" fill="#e8e8e8" stroke="#707070" />
          <circle cx="11.500" cy="5.500" r="4.500" fill="#e8e8e8" stroke="#707070" />
          <circle cx="12.500" cy="5.500" r="1.500" fill="none" stroke="#707070" />
        </svg>
      </StatusPane>
      <StatusPane $w={453}>
        <Label>Selected 2,906,544 bytes in 1 file</Label>
      </StatusPane>
      <StatusPane>
        <Label $ls={-0.08}>Total 18,327,020 bytes in 2 files</Label>
        <Spacer />
        <SizeGrip>
          <svg width="13" height="13" viewBox="0 0 13 13">
            <path d="M1 13L13 1M5 13l8-8M9 13l4-4" stroke="#808080" strokeWidth="1.500" />
            <path d="M0 13L13 0M4 13l9-9M8 13l5-5" stroke="#fff" strokeWidth=".7" />
          </svg>
        </SizeGrip>
      </StatusPane>
    </StatusBar>
  </RarWindow>
);

const App: React.FC = () => (
  <>
    <GlobalStyle />
    <Screen>
      <Desktop>
        <Wallpaper width="1280" height="692" viewBox="0 0 1280 692">
          <path d="M1247 0l-62 58" stroke="#5a8cc8" strokeOpacity=".35" strokeWidth="2" />
          <path d="M44 693Q80 670 124 657" stroke="#c8f4ff" strokeOpacity=".8" strokeWidth="3" fill="none" />
          <path d="M86 693q16-22 38-34" stroke="#b8f0ff" strokeOpacity=".7" strokeWidth="2" fill="none" />
          <path d="M118 693l7-12" stroke="#70e0a0" strokeWidth="3" />
        </Wallpaper>
        <IconGrid>
          {shortcuts.map((item, index) => (
            <Shortcut key={index} $col={item.col} $row={item.row}>
              {item.icon}
              <ShortcutLabel $ls={item.ls ?? -0.1} $shift={item.shift}>{item.name}</ShortcutLabel>
            </Shortcut>
          ))}
        </IconGrid>
        <Browser />
        <Archiver />
      </Desktop>
      <Taskbar>
        <StartButton>
          <WindowsFlag />
          <Label $ls={-0.4}>Start</Label>
        </StartButton>
        <QuickLaunch $w={34}><IeIcon /></QuickLaunch>
        <QuickLaunch $w={34}><ExplorerIcon /></QuickLaunch>
        <QuickLaunch $w={34}><MediaIcon /></QuickLaunch>
        <TaskButton>
          <svg width="15" height="15" viewBox="2 0 44 46"><ChromeLogo /></svg>
        </TaskButton>
        <QuickLaunch $w={36}><OperaSmall /></QuickLaunch>
        <TaskButton $pressed><RarIcon /></TaskButton>
        <Spacer />
        <Tray>
          <svg width="10" height="12" viewBox="0 0 10 12">
            <path d="M2 4l3-3 3 3M2 9l3-3 3 3" fill="none" stroke="#000" strokeWidth="1.400" />
          </svg>
          <svg width="34" height="16" viewBox="0 0 34 16">
            <path d="M9 6h3l4-4v12l-4-4H9z" fill="#f4f4f4" stroke="#606060" />
            <path d="M18 5q2 3 0 6M20.500 3q3.500 5 0 10M23 2q4 6 0 12" fill="none" stroke="#707070" />
          </svg>
          <svg width="18" height="16" viewBox="0 0 18 16">
            <rect x="4.500" y="2.500" width="11" height="9" fill="#e4e4e4" stroke="#505050" />
            <path d="M.5 1v4q2 2 4 0V1M2.500 6v9h6" fill="#fff" stroke="#404040" />
            <path d="M10.500 6l5 9h-10z" fill="#f8d820" stroke="#a08000" />
            <path d="M10.500 9v3M10.500 13v1" stroke="#000" />
          </svg>
          <svg width="28" height="16" viewBox="0 0 28 16">
            <path d="M7 1v14.500" stroke="#707070" strokeWidth="1.500" />
            <path d="M8 2.500q4-1.500 7 1 3 1 6 0l-2 5q-3 1-5-.5-3-1.500-6 0z" fill="#fff" stroke="#707070" />
          </svg>
          <Clock>10:29 AM</Clock>
          <svg width="16" height="14" viewBox="0 0 16 14">
            <rect x=".5" y="1.500" width="15" height="10" fill="#2c68c0" stroke="#184080" />
            <path d="M1 2h14v3q-6 4-14 4z" fill="#70a4e4" fillOpacity=".6" />
            <rect x="2" y="9.500" width="4" height="2" fill="#c8e0f8" />
          </svg>
        </Tray>
      </Taskbar>
      <Watermark width="220" height="90" viewBox="0 0 220 90">
        <defs>
          <filter id="soft" x="-10%" y="-10%" width="120%" height="120%">
            <feDropShadow dx="0" dy="0" stdDeviation="2" floodColor="#505860" floodOpacity=".5" />
          </filter>
        </defs>
        <g fill="#fff" fillOpacity=".7" filter="url(#soft)" fontFamily="Roboto, sans-serif" fontWeight="400" fontSize="50">
          <text x="8" y="59" textLength="65" lengthAdjust="spacingAndGlyphs">ANY</text>
          <path d="M87 57V24l-7 3v36l12 7M93 58V12l41 25M93 55V38M134 44L94 69l-2-4 38-24M93 27l37 19" fill="none" stroke="#fff" strokeOpacity=".8" strokeWidth="3.500" strokeLinejoin="round" strokeLinecap="round" />
        </g>
        <text x="140" y="59" textLength="62" lengthAdjust="spacingAndGlyphs" fill="#c4daf2" fillOpacity=".7" fontFamily="Roboto, sans-serif" fontWeight="400" fontSize="50">RUN</text>
      </Watermark>
    </Screen>
  </>
);

export default App;
